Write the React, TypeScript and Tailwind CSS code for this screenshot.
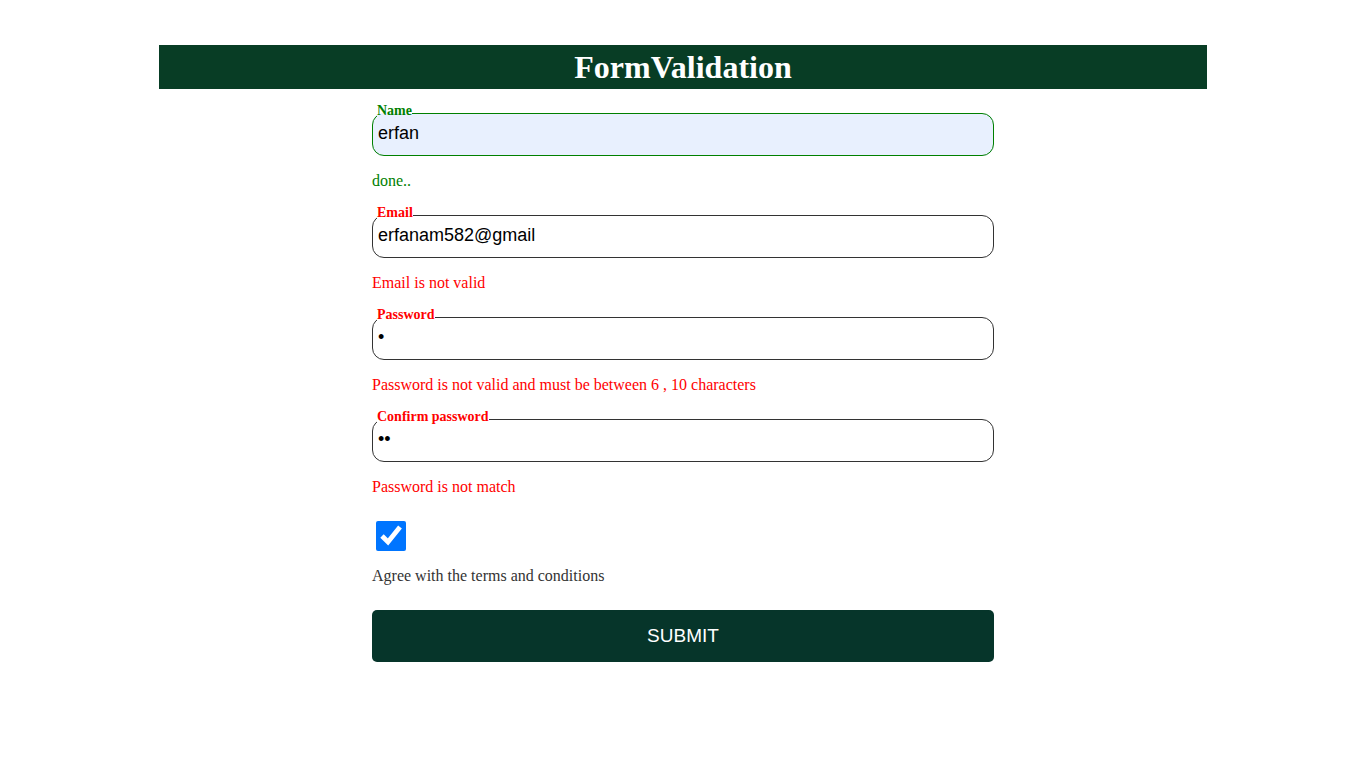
import React, { useState } from "react";

type Field = {
  label: string;
  type: string;
  value: string;
  message: string;
  ok: boolean;
};

const fields: Field[] = [
  { label: "Name", type: "text", value: "erfan", message: "done..", ok: true },
  {
    label: "Email",
    type: "text",
    value: "erfanam582@gmail",
    message: "Email is not valid",
    ok: false,
  },
  {
    label: "Password",
    type: "password",
    value: "1",
    message: "Password is not valid and must be between 6 , 10 characters",
    ok: false,
  },
  {
    label: "Confirm password",
    type: "password",
    value: "12",
    message: "Password is not match",
    ok: false,
  },
];

const FormField: React.FC<{ field: Field }> = ({ field }) => (
  <>
    <fieldset
      className={
        field.ok
          ? "m-0 p-0 pb-[10px] rounded-[12px] border border-[#008000] bg-[#e8f0fe]"
          : "m-0 p-0 pb-[10px] rounded-[12px] border border-[#333333] bg-white"
      }
    >
      <legend
        className={
          field.ok
            ? "ml-[4px] px-0 pb-[4px] text-[14px] font-bold leading-[14px] text-[#008000]"
            : "ml-[4px] px-0 pb-[4px] text-[14px] font-bold leading-[14px] text-[#ff0000]"
        }
      >
        {field.label}
      </legend>
      <input
        type={field.type}
        defaultValue={field.value}
        className="block w-full h-[23px] bg-transparent px-[5px] font-['Liberation_Sans',Arial,sans-serif] text-[18px] text-black outline-none"
      />
    </fieldset>
    <p
      className={
        field.ok
          ? "my-4 text-[16px] leading-[18px] text-[#008000]"
          : "my-4 text-[16px] leading-[18px] text-[#ff0000]"
      }
    >
      {field.message}
    </p>
  </>
);

export default function App() {
  const [agree, setAgree] = useState(true);

  return (
    <div className="min-h-screen bg-white pt-[45px] font-['Liberation_Serif','Times_New_Roman',serif]">
      <header className="mx-auto flex h-[44px] w-[1048px] items-center justify-center bg-[#083d25]">
        <h1 className="text-[32px] font-bold leading-none text-white">
          FormValidation
        </h1>
      </header>

      <form
        className="mx-auto mt-[15px] w-[622px]"
        onSubmit={(e) => e.preventDefault()}
      >
        {fields.map((f) => (
          <FormField key={f.label} field={f} />
        ))}

        <div className="ml-[4px] mt-[25px] flex">
          <input
            type="checkbox"
            checked={agree}
            onChange={() => setAgree((prev) => !prev)}
            className="m-0 h-[30px] w-[30px] accent-[#0075ff]"
          />
        </div>
        <p className="mt-[16px] text-[16px] leading-[17px] text-[#333333]">
          Agree with the terms and conditions
        </p>

        <button
          type="submit"
          className="mt-[26px] h-[52px] w-full rounded-[5px] bg-[#06352a] font-['Liberation_Sans',Arial,sans-serif] text-[19px] text-white"
        >
          SUBMIT
        </button>
      </form>
    </div>
  );
}
